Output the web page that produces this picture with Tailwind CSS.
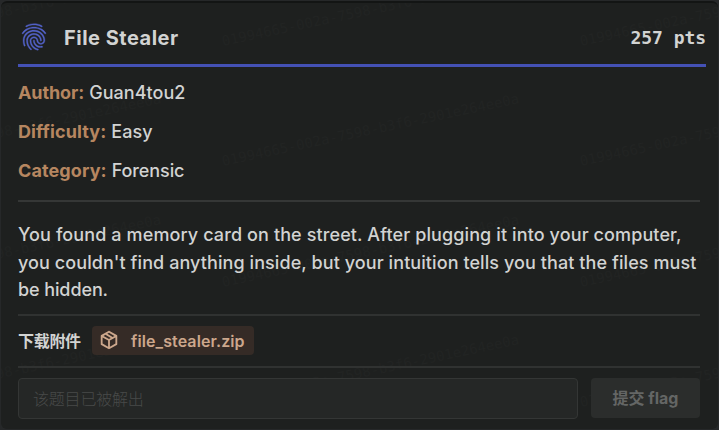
<!DOCTYPE html>
<html lang="zh">
<head>
<meta charset="utf-8">
<title>File Stealer</title>
<script src="https://cdn.jsdelivr.net/npm/@tailwindcss/browser@4"></script>
</head>
<body class="h-[430px] overflow-hidden bg-[#262829] pt-px pr-px pl-px font-['Inter','Noto_Sans_CJK_SC',sans-serif] text-[18px] text-[#d2d3d2]">
<main class="relative flex h-[428px] flex-col overflow-hidden rounded-[6px] border-t-2 border-[#131514] bg-[#1e201f] pr-[18px] pl-[17px]">
  <!-- Tiled watermark -->
  <svg class="pointer-events-none absolute -top-[3px] -left-px h-[430px] w-[719px] fill-[#222423] font-['DejaVu_Sans_Mono',monospace] text-[14px]" aria-hidden="true">
    <defs><text id="wm" transform="rotate(-12)">01994665-002a-7598-b3f6-2901e264ee0a</text></defs>
    <use href="#wm" x="-135" y="46"/><use href="#wm" x="223" y="46"/><use href="#wm" x="581" y="46"/>
    <use href="#wm" x="-135" y="166"/><use href="#wm" x="223" y="166"/><use href="#wm" x="581" y="166"/>
    <use href="#wm" x="-135" y="287"/><use href="#wm" x="223" y="287"/><use href="#wm" x="581" y="287"/>
    <use href="#wm" x="-135" y="407"/><use href="#wm" x="223" y="407"/><use href="#wm" x="581" y="407"/>
  </svg>
  <header class="relative -mr-[6px] flex h-[64px] shrink-0 items-center border-b-3 border-[#4451b5] pt-[8px]">
    <svg class="-mt-[2px] size-8 shrink-0 fill-[#5261c6] stroke-[#5261c6] stroke-[0.25]" viewBox="0 0 24 24"><path d="M17.81,4.47C17.73,4.47 17.65,4.45 17.58,4.41C15.66,3.42 14,3 12,3C10.03,3 8.15,3.47 6.44,4.41C6.2,4.54 5.9,4.45 5.76,4.21C5.63,3.97 5.72,3.66 5.96,3.53C7.82,2.5 9.86,2 12,2C14.14,2 16,2.47 18.04,3.5C18.29,3.65 18.38,3.95 18.25,4.19C18.16,4.37 18,4.47 17.81,4.47M3.5,9.72C3.4,9.72 3.3,9.69 3.21,9.63C3,9.47 2.93,9.16 3.09,8.93C4.08,7.53 5.34,6.43 6.84,5.66C10,4.04 14,4.03 17.15,5.65C18.65,6.42 19.91,7.5 20.9,8.9C21.06,9.12 21,9.44 20.78,9.6C20.55,9.76 20.24,9.71 20.08,9.5C19.18,8.22 18.04,7.23 16.69,6.54C13.82,5.07 10.15,5.07 7.29,6.55C5.93,7.25 4.79,8.25 3.89,9.5C3.81,9.65 3.66,9.72 3.5,9.72M9.75,21.79C9.62,21.79 9.5,21.74 9.4,21.64C8.53,20.77 8.06,20.21 7.39,19C6.7,17.77 6.34,16.27 6.34,14.66C6.34,11.69 8.88,9.27 12,9.27C15.12,9.27 17.66,11.69 17.66,14.66A0.5,0.5 0 0,1 17.16,15.16A0.5,0.5 0 0,1 16.66,14.66C16.66,12.24 14.57,10.27 12,10.27C9.43,10.27 7.34,12.24 7.34,14.66C7.34,16.1 7.66,17.43 8.27,18.5C8.91,19.66 9.35,20.15 10.12,20.93C10.31,21.13 10.31,21.44 10.12,21.64C10,21.74 9.88,21.79 9.75,21.79M16.92,19.94C15.73,19.94 14.68,19.64 13.82,19.05C12.33,18.04 11.44,16.4 11.44,14.66A0.5,0.5 0 0,1 11.94,14.16A0.5,0.5 0 0,1 12.44,14.66C12.44,16.07 13.16,17.4 14.38,18.22C15.09,18.7 15.92,18.93 16.92,18.93C17.16,18.93 17.56,18.9 17.96,18.83C18.23,18.78 18.5,18.96 18.54,19.24C18.59,19.5 18.41,19.77 18.13,19.82C17.56,19.93 17.06,19.94 16.92,19.94M14.91,22C14.87,22 14.82,22 14.78,22C13.19,21.54 12.15,20.95 11.06,19.88C9.66,18.5 8.89,16.64 8.89,14.66C8.89,13.04 10.27,11.72 11.97,11.72C13.67,11.72 15.05,13.04 15.05,14.66C15.05,15.73 16,16.6 17.13,16.6C18.28,16.6 19.21,15.73 19.21,14.66C19.21,10.89 15.96,7.83 11.96,7.83C9.12,7.83 6.5,9.41 5.35,11.86C4.96,12.67 4.76,13.62 4.76,14.66C4.76,15.44 4.83,16.67 5.43,18.27C5.53,18.53 5.4,18.82 5.14,18.91C4.88,19 4.59,18.87 4.5,18.62C4,17.31 3.77,16 3.77,14.66C3.77,13.46 4,12.37 4.45,11.42C5.78,8.63 8.73,6.82 11.96,6.82C16.5,6.82 20.21,10.33 20.21,14.65C20.21,16.27 18.83,17.59 17.13,17.59C15.43,17.59 14.05,16.27 14.05,14.65C14.05,13.58 13.12,12.71 11.97,12.71C10.82,12.71 9.89,13.58 9.89,14.65C9.89,16.36 10.55,17.96 11.76,19.16C12.71,20.1 13.62,20.62 15.03,21C15.3,21.08 15.45,21.36 15.38,21.62C15.33,21.85 15.12,22 14.91,22Z"/></svg>
    <h1 class="ml-[14px] text-[20px] font-bold tracking-[0.5px]">File Stealer</h1>
    <span class="ml-auto font-['DejaVu_Sans_Mono',monospace] text-[18px] font-bold tracking-[-0.05px]">257 pts</span>
  </header>
  <dl class="relative flex h-[135px] shrink-0 flex-col gap-[12px] border-b-2 border-[#353736] pt-[12px] leading-[27px]">
    <div class="flex gap-[5px]"><dt class="font-bold tracking-[-0.1px] text-[#b68660]">Author:</dt><dd class="font-medium tracking-[0.05px]">Guan4tou2</dd></div>
    <div class="flex gap-[5px]"><dt class="font-bold tracking-[0.1px] text-[#b68660]">Difficulty:</dt><dd class="font-medium">Easy</dd></div>
    <div class="flex gap-[5px]"><dt class="font-bold tracking-[0.1px] text-[#b68660]">Category:</dt><dd class="font-medium tracking-[-0.1px]">Forensic</dd></div>
  </dl>
  <p class="relative h-[114px] shrink-0 border-b-2 border-[#303231] pt-[19px] leading-[27.6px] font-medium whitespace-nowrap"><span class="tracking-[0.11px]">You found a memory card on the street. After plugging it into your computer,</span><br><span class="tracking-[0.08px]">you couldn't find anything inside, but your intuition tells you that the files must</span><br><span class="tracking-[-0.1px]">be hidden.</span></p>
  <section class="relative flex h-[52px] shrink-0 items-center border-b-2 border-[#303231]">
    <span class="-mt-px w-[74px] text-[16px] font-bold tracking-[-0.3px]">下载附件</span>
    <a class="-mt-px flex h-[29px] w-[162px] items-center rounded-[4px] bg-[#352b26] pl-[6px] text-[#cca78c]">
      <svg class="-mt-[1px] size-[22px] shrink-0 fill-current" viewBox="0 0 24 24"><path d="M21,16.5C21,16.88 20.79,17.21 20.47,17.38L12.57,21.82C12.41,21.94 12.21,22 12,22C11.79,22 11.59,21.94 11.43,21.82L3.53,17.38C3.21,17.21 3,16.88 3,16.5V7.5C3,7.12 3.21,6.79 3.53,6.62L11.43,2.18C11.59,2.06 11.79,2 12,2C12.21,2 12.41,2.06 12.57,2.18L20.47,6.62C20.79,6.79 21,7.12 21,7.5V16.5M12,4.15L10.11,5.22L16,8.61L17.96,7.5L12,4.15M6.04,7.5L12,10.85L13.96,9.75L8.08,6.35L6.04,7.5M5,15.91L11,19.29V12.58L5,9.21V15.91M19,15.91V9.21L13,12.58V19.29L19,15.91Z"/></svg>
      <span class="ml-[11px] text-[16px] font-semibold tracking-[0.1px]">file_stealer.zip</span>
    </a>
  </section>
  <form class="relative mt-[10px] flex gap-[13px]">
    <div class="flex h-[41px] flex-1 items-center rounded-[4px] border border-[#343635] bg-[#252726] pl-[14px] text-[16px] font-light tracking-[-0.2px] text-[#484a49]">该题目已被解出</div>
    <button type="button" class="h-[40px] w-[109px] rounded-[4px] bg-[#2b2d2c] text-[16px] font-bold text-[#646665]">提交 flag</button>
  </form>
</main>
</body>
</html>
